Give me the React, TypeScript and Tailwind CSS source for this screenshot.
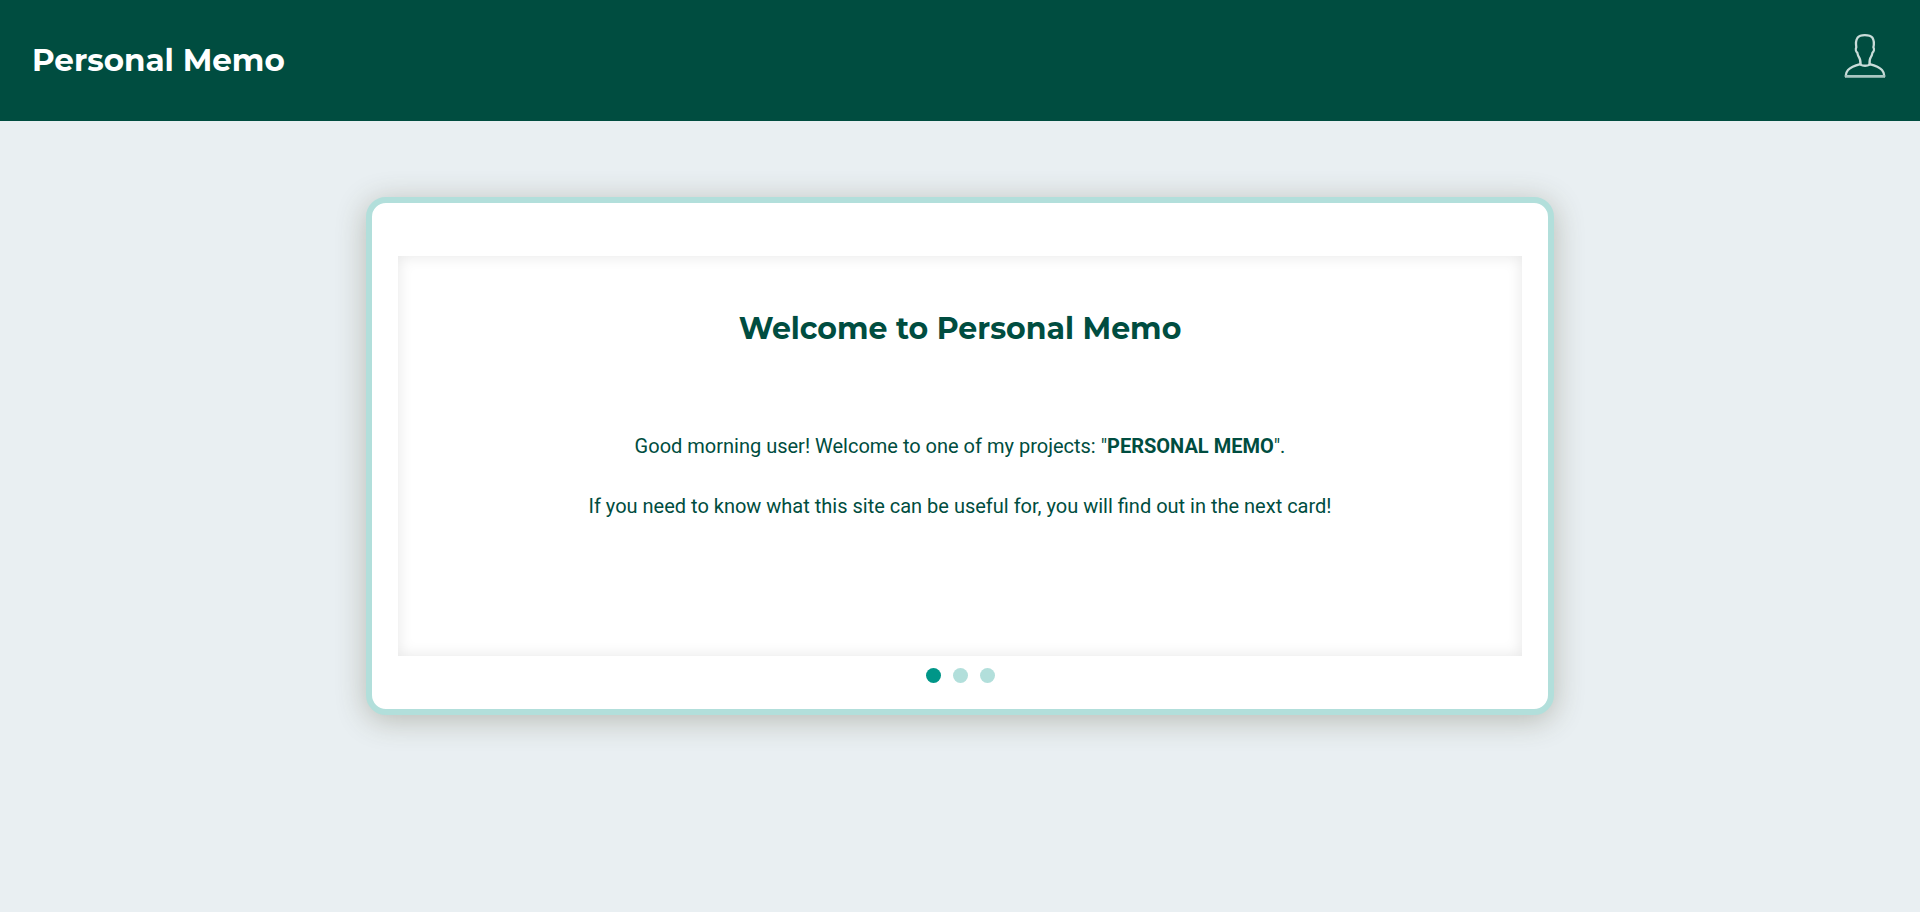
import { useState } from "react";

const cards = [
  {
    title: "Welcome to Personal Memo",
    body: (
      <>
        <p>
          Good morning user! Welcome to one of my projects: "<strong className="font-bold">PERSONAL MEMO</strong>".
        </p>
        <p>If you need to know what this site can be useful for, you will find out in the next card!</p>
      </>
    ),
  },
  { title: "Welcome to Personal Memo", body: null },
  { title: "Welcome to Personal Memo", body: null },
];

function UserIcon() {
  return (
    <svg viewBox="0 0 50 50" className="size-[50px]" fill="none" aria-hidden="true">
      <g stroke="#c9dcd9" strokeWidth="2.3" strokeLinejoin="round" strokeLinecap="round">
        <path d="M20.5 34.2C20.6 31 20.4 29 19 27.2C17.8 25.6 17.6 24.2 17.3 22.6C15.8 21.6 15.5 19 16.3 17.3C15.7 13.6 15.8 10.2 17.5 7.8C19.2 5.6 22 5.1 24.8 5.1C27.8 5.1 30.8 5.6 32.5 7.8C34 10.2 34.2 13.6 33.4 17.3C34.3 19 34 21.6 32.5 22.6C32.2 24.2 31.9 25.6 30.8 27.2C29.5 29 29.4 31 29.6 34.2" />
        <path d="M20.3 34.2C15 35.7 10.8 37.2 8 40C6.4 41.7 5.9 43.8 5.7 46M29.7 34.2C35 35.7 39.2 37.2 42 40C43.6 41.7 44.1 43.8 44.3 46" />
        <path d="M20.5 34.6C22.8 36.1 27.3 36.1 29.6 34.6" />
      </g>
      <path d="M5 46.4H45" stroke="#a9c6c1" strokeWidth="2.8" />
    </svg>
  );
}

export default function App() {
  const [active, setActive] = useState(0);
  const card = cards[active];

  return (
    <div className="flex min-h-screen flex-col bg-[#e9eff2] font-['Roboto',sans-serif] text-[#004d40]">
      <header className="flex items-start justify-between bg-[#004d40] py-[30px] pr-[30px] pl-8">
        <h1 className="font-['Montserrat','Inter',sans-serif] text-[31px] leading-[60px] font-bold text-white">
          Personal Memo
        </h1>
        <button type="button" aria-label="User account" className="h-[61px] cursor-pointer pb-[11px]">
          <UserIcon />
        </button>
      </header>

      <main className="px-8 py-[76px]">
        <section className="mx-auto w-full max-w-[1188px] rounded-[20px] border-6 border-[#b2dfdb] bg-white px-[26px] pt-[53px] pb-[26px] shadow-[0_5px_30px_rgba(70,65,35,0.3)]">
          <article className="min-h-[400px] px-6 py-[53px] text-center shadow-[inset_0_0_15px_rgba(0,0,0,0.1)]">
            <h2 className="font-['Montserrat','Inter',sans-serif] text-[30px] leading-[40px] font-bold">
              {card.title}
            </h2>
            <div className="mt-[82px] flex flex-col gap-[30px] text-[20px] leading-[30px]">{card.body}</div>
          </article>
          <nav aria-label="Cards" className="mt-[12px] flex justify-center gap-[12px]">
            {cards.map((_, i) => (
              <button
                key={i}
                type="button"
                aria-label={`Card ${i + 1}`}
                aria-current={i === active}
                onClick={() => setActive(i)}
                className={
                  i === active
                    ? "size-[15px] cursor-pointer rounded-full bg-[#009688]"
                    : "size-[15px] cursor-pointer rounded-full bg-[#b2dfdb]"
                }
              />
            ))}
          </nav>
        </section>
      </main>
    </div>
  );
}
